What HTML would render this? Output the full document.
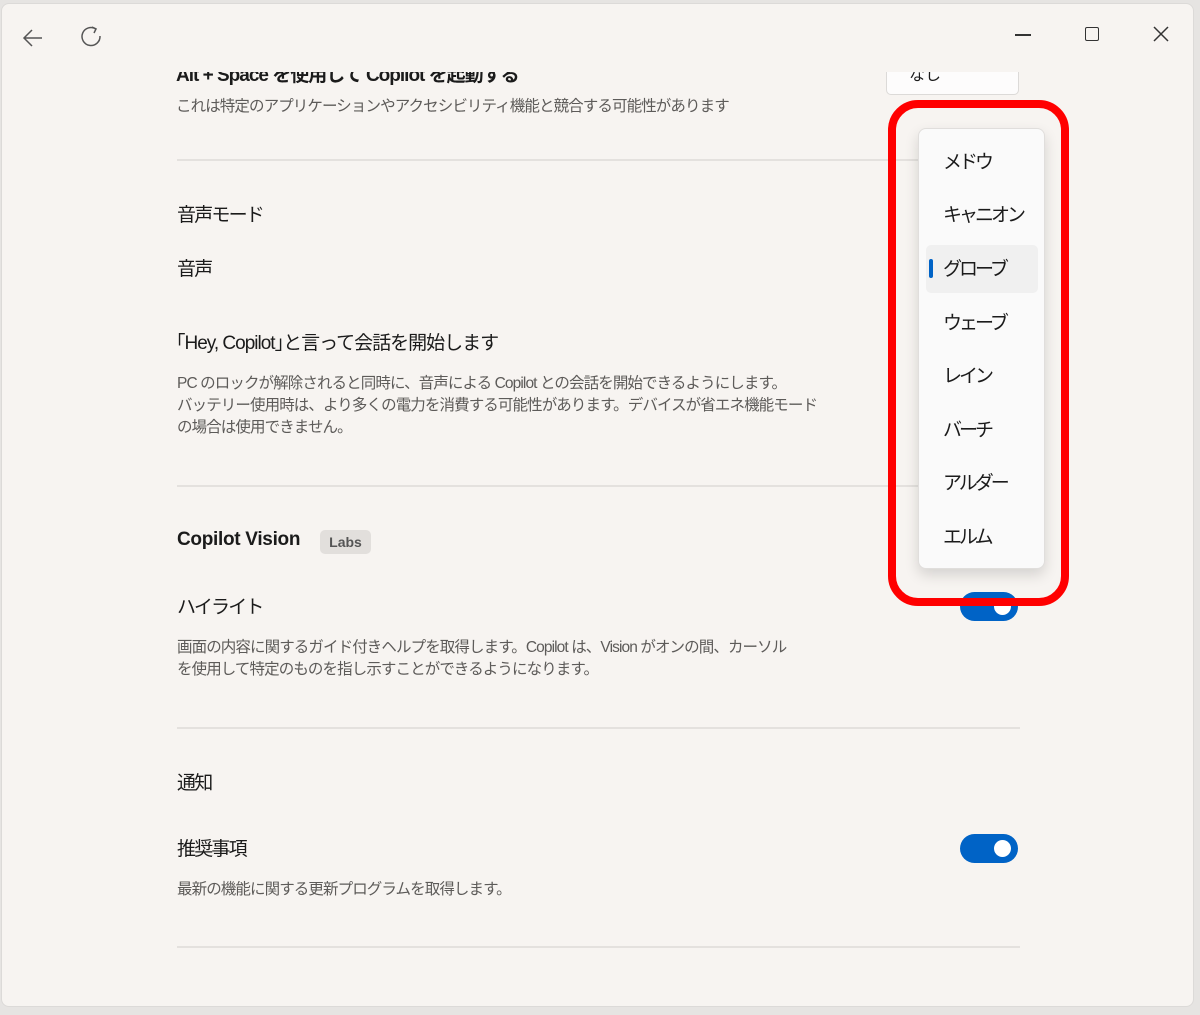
<!DOCTYPE html>
<html><head><meta charset="utf-8"><style>
*{margin:0;padding:0;box-sizing:border-box}
body{width:1200px;height:1015px;background:#e6e4e2;position:relative;overflow:hidden;font-family:"Liberation Sans","Noto Sans CJK JP",sans-serif;color:#1b1b1b}
.win{position:absolute;left:1px;top:3px;width:1193px;height:1004px;background:#f7f4f1;border-radius:8px;border:1px solid #dcdad8;overflow:hidden}
.a{position:absolute;white-space:nowrap}
.t{font-size:19px;color:#1b1b1b;letter-spacing:-1.8px}
.d{font-size:15.5px;color:#5d5b59;line-height:22px;letter-spacing:-0.9px}
.hr{position:absolute;left:175px;width:843px;height:2px;background:#e4e1de}
.tog{position:absolute;width:58px;height:29px;border-radius:15px;background:#0063c6}
.tog::after{content:"";position:absolute;right:7px;top:6px;width:17px;height:17px;border-radius:50%;background:#fff}
.menu{position:absolute;left:918px;top:128px;width:127px;height:441px;background:#fafafa;border-radius:8px;border:1px solid #e0dedc;box-shadow:0 6px 14px rgba(0,0,0,.14)}
.mi{position:absolute;left:24px;font-size:19px;color:#1b1b1b;letter-spacing:-3px}
</style></head><body>
<div class="win">
<svg class="a" style="left:18px;top:21px" width="26" height="26" viewBox="0 0 26 26"><path d="M22 13H4M12 5L4 13L12 21" fill="none" stroke="#555" stroke-width="1.5"/></svg>
<svg class="a" style="left:77px;top:19px" width="26" height="26" viewBox="0 0 26 26"><path d="M17 6A9 9 0 1 0 21 13" fill="none" stroke="#555" stroke-width="1.5"/><path d="M13 4L17 6L15 10" fill="none" stroke="#555" stroke-width="1.5"/></svg>
<div class="a" style="left:1013px;top:30px;width:16px;height:1.5px;background:#333"></div>
<div class="a" style="left:1083px;top:23px;width:14px;height:14px;border:1.5px solid #333;border-radius:2px"></div>
<svg class="a" style="left:1151px;top:22px" width="16" height="16" viewBox="0 0 16 16"><path d="M1 1L15 15M15 1L1 15" stroke="#333" stroke-width="1.5"/></svg>

<div class="a t" style="left:174px;top:56px;font-weight:bold;letter-spacing:-1px;clip-path:inset(12px 0 0 0)">Alt + Space を使用して Copilot を起動する</div>
<div class="a" style="left:884px;top:60px;width:133px;height:31px;background:#fdfcfc;border:1px solid #dcdad8;border-radius:5px;clip-path:inset(8px -2px -2px -2px)"><span style="position:absolute;left:22px;top:-4px;font-size:16px">なし</span></div>
<div class="a d" style="left:174px;top:92px">これは特定のアプリケーションやアクセシビリティ機能と競合する可能性があります</div>
<div class="hr" style="top:155px"></div>

<div class="a t" style="left:175px;top:196px">音声モード</div>
<div class="a t" style="left:175px;top:250px">音声</div>
<div class="a t" style="left:174px;top:324px;letter-spacing:-1px">｢Hey, Copilot｣と言って会話を開始します</div>
<div class="a d" style="left:175px;top:369px">PC のロックが解除されると同時に、音声による Copilot との会話を開始できるようにします。<br>バッテリー使用時は、より多くの電力を消費する可能性があります。デバイスが省エネ機能モード<br>の場合は使用できません。</div>
<div class="hr" style="top:481px"></div>

<div class="a t" style="left:175px;top:525px;font-weight:bold;letter-spacing:-0.3px">Copilot Vision</div>
<div class="a" style="left:318px;top:526px;width:51px;height:24px;background:#e2dfdc;border-radius:5px;font-size:14px;font-weight:bold;color:#555;text-align:center;line-height:24px">Labs</div>
<div class="a t" style="left:175px;top:588px">ハイライト</div>
<div class="tog" style="left:958px;top:588px"></div>
<div class="a d" style="left:175px;top:633px">画面の内容に関するガイド付きヘルプを取得します。Copilot は、Vision がオンの間、カーソル<br>を使用して特定のものを指し示すことができるようになります。</div>
<div class="hr" style="top:723px"></div>

<div class="a t" style="left:175px;top:764px">通知</div>
<div class="a t" style="left:175px;top:830px">推奨事項</div>
<div class="tog" style="left:958px;top:830px"></div>
<div class="a d" style="left:175px;top:875px">最新の機能に関する更新プログラムを取得します。</div>
<div class="hr" style="top:942px"></div>
</div>

<div class="menu">
<div class="mi" style="top:18px">メドウ</div>
<div class="mi" style="top:71px">キャニオン</div>
<div style="position:absolute;left:7px;top:116px;width:112px;height:48px;background:#f0f0f0;border-radius:5px"></div>
<div style="position:absolute;left:10px;top:130px;width:4px;height:19px;background:#0063c6;border-radius:2px"></div>
<div class="mi" style="top:125px">グローブ</div>
<div class="mi" style="top:179px">ウェーブ</div>
<div class="mi" style="top:232px">レイン</div>
<div class="mi" style="top:286px">バーチ</div>
<div class="mi" style="top:339px">アルダー</div>
<div class="mi" style="top:393px">エルム</div>
</div>
<div style="position:absolute;left:888px;top:100px;width:181px;height:506px;border:8px solid #ff0000;border-radius:30px"></div>
</body></html>
